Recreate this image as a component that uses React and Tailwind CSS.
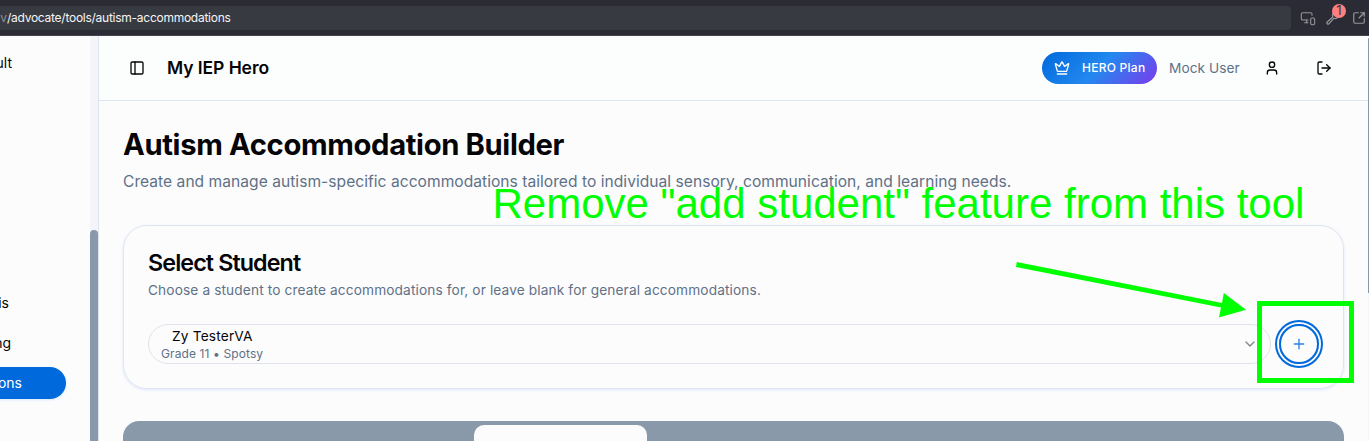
import { ChevronDown, Crown, LogOut, PanelLeft, Plus, SquareArrowOutUpRight, User, MonitorSmartphone } from "lucide-react";

function WrenchIcon() {
  return (
    <svg className="ml-[10px] size-[15px]" viewBox="0 0 15 15" fill="none" stroke="currentColor" strokeWidth="1.2" strokeLinecap="round" strokeLinejoin="round">
      <path d="M7.4 3.2 C6.3 4.4 6.3 5.8 6.8 7 L1.2 12 C0.2 13.2 1.7 14.8 2.9 13.8 L8 8.2 C9.2 8.8 10.8 8.5 12 7.4" />
    </svg>
  );
}

function BrowserBar() {
  return (
    <div className="flex h-9 shrink-0 items-center border-b border-[#44434f] bg-[#2a2b34]">
      <div className="flex h-6 w-[1291px] items-center rounded-r-[4px] bg-[#383a42] text-[12px] text-[#f5f5f7]">
        <span className="flex w-[7px] justify-end text-[#8f9098]">v</span>
        <span className="tracking-[-0.26px]">/advocate/tools/autism-accommodations</span>
      </div>
      <div className="relative flex items-center text-[#96979d]">
        <MonitorSmartphone className="ml-[9px] size-4" strokeWidth={1.6} />
        <WrenchIcon />
        <SquareArrowOutUpRight className="ml-[11px] size-[14px]" strokeWidth={2} />
        <span className="absolute left-[41px] -top-[6px] flex size-[14px] items-center justify-center rounded-full bg-[#ff7f7f] text-[13px] text-[#33343c]">1</span>
      </div>
    </div>
  );
}

function Sidebar() {
  return (
    <aside className="flex w-[99px] shrink-0 border-r border-[#dfe5ef] bg-[#fcfcfd] text-[14px] leading-5 text-[#050507]">
      <div className="flex w-[90px] flex-col overflow-hidden">
        <div className="mt-[17px] flex w-3 justify-end">ult</div>
        <div className="mt-[220px] flex w-[9px] justify-end">is</div>
        <div className="mt-5 flex w-[11px] justify-end">ng</div>
        <div className="mt-[14px] flex h-8 w-[66px] items-center rounded-r-2xl bg-[#006adc] text-white shadow-sm shadow-blue-100">
          <span className="flex w-[22px] justify-end">ons</span>
        </div>
      </div>
      <div className="flex w-2 flex-col bg-[#f4f5f8] pt-[194px]">
        <div className="flex-1 rounded-t-full bg-[#8a99aa]" />
      </div>
    </aside>
  );
}

function Header() {
  return (
    <header className="flex h-[65px] shrink-0 items-center border-b border-[#dce4ee] bg-[#fcfefe] pl-[30px] text-[#050507]">
      <PanelLeft className="size-4" strokeWidth={2} />
      <span className="ml-[22px] text-[17.5px] font-semibold leading-7 tracking-[-0.07px]">My IEP Hero</span>
      <div className="ml-auto mr-[36px] flex items-center">
        <div className="flex h-8 w-[115px] items-center rounded-2xl bg-[linear-gradient(135deg,#006adc_0%,#2388ef_50%,#7c3aed_100%)] pl-3 text-[12px] font-medium text-white">
          <Crown className="size-4" />
          <span className="ml-3 whitespace-nowrap tracking-[0.25px]">HERO Plan</span>
        </div>
        <span className="ml-3 w-[71px] whitespace-nowrap text-[13.7px] leading-5 tracking-[0.05px] text-[#5f7187]">Mock User</span>
        <User className="ml-6 size-4" />
        <LogOut className="ml-9 size-4" />
      </div>
    </header>
  );
}

function StudentCard() {
  return (
    <section className="mt-[31px] h-[164px] shrink-0 rounded-3xl border border-[#dfe5ef] px-6 pt-[21px] shadow-[0_1px_3px_rgba(0,106,220,0.14)]">
      <h2 className="text-[23.3px] font-semibold leading-8 tracking-[-0.9px] text-[#050507]">Select Student</h2>
      <p className="mt-[1px] text-[13.7px] leading-5 tracking-[0.12px] text-[#5f7187]">Choose a student to create accommodations for, or leave blank for general accommodations.</p>
      <div className="mt-6 flex h-10 items-center">
        <div className="flex h-10 w-[1123px] items-center rounded-[20px] border border-[#dfe3ec] pl-3 pr-3">
          <div className="flex flex-col">
            <span className="-mt-px ml-[11px] text-[13.7px] leading-5 tracking-[0.18px] text-[#050507]">Zy TesterVA</span>
            <span className="text-[12px] leading-4 tracking-[0.11px] text-[#5f7187]">Grade 11 • Spotsy</span>
          </div>
          <ChevronDown className="ml-auto size-4 text-[#858589]" />
        </div>
        <button className="ml-2 flex size-10 items-center justify-center rounded-full border-2 border-[#006adc] ring-2 ring-[#006adc] ring-offset-2 ring-offset-[#fcfcfd]">
          <Plus className="size-4 text-[#2b81e2]" strokeWidth={2} />
        </button>
      </div>
    </section>
  );
}

function Annotations() {
  return (
    <div className="pointer-events-none absolute inset-0">
      <span className="absolute left-[492.5px] top-[180px] whitespace-nowrap font-['Liberation_Sans',sans-serif] text-[42px] leading-[48px] text-[#00ff00]">Remove "add student" feature from this tool</span>
      <svg className="absolute left-[1010px] top-[255px]" width="240" height="70" viewBox="1010 255 240 70" fill="#00ff00">
        <path d="M1016.8 262 L1222 303 L1223.8 293 L1246 309.7 L1219 317.4 L1221 307.5 L1016 267 Z" />
      </svg>
      <div className="absolute left-[1257px] top-[301px] h-[82px] w-[97px] border-[5px] border-[#00ff00]" />
    </div>
  );
}

export default function App() {
  return (
    <div className="relative flex h-[441px] w-[1369px] flex-col overflow-hidden bg-[#fcfcfd] font-['Inter',sans-serif]">
      <BrowserBar />
      <div className="flex min-h-0 flex-1">
        <Sidebar />
        <div className="flex w-[1269px] shrink-0 flex-col">
          <Header />
          <main className="flex min-h-0 flex-1 flex-col overflow-hidden pl-6 pr-6 pt-6">
            <h1 className="mt-[2px] text-[29.2px] font-bold leading-9 tracking-[-0.35px] text-[#050507]">Autism Accommodation Builder</h1>
            <p className="mt-[7px] text-[15.6px] leading-6 tracking-[0.025px] text-[#5f7187]">Create and manage autism-specific accommodations tailored to individual sensory, communication, and learning needs.</p>
            <StudentCard />
            <div className="mt-8 flex h-12 shrink-0 rounded-t-2xl bg-[#8a99aa] pl-[351px] pt-1">
              <div className="w-[173px] rounded-t-[10px] bg-[#fcfcfd]" />
            </div>
          </main>
        </div>
        <div className="w-px bg-[#f4f5f8] pt-[2px]">
          <div className="h-[255px] rounded-t-full bg-[#8a99aa]" />
        </div>
      </div>
      <Annotations />
    </div>
  );
}
